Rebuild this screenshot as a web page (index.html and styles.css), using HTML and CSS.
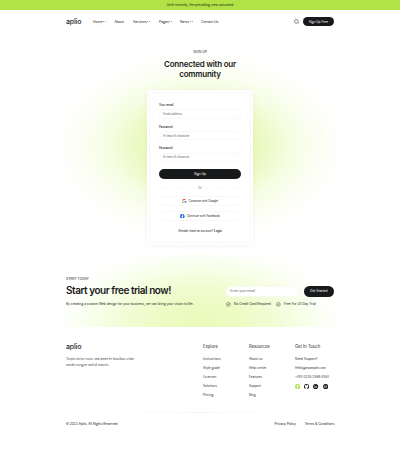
FILE: index.html
```html
<!DOCTYPE html>
<html lang="en">
<head>
<meta charset="utf-8">
<title>Aplio – Sign Up</title>
<link rel="stylesheet" href="styles.css">
</head>
<body>
<div class="banner">Until recently, the prevailing view assumed</div>
<header class="header">
  <div class="logo">aplio</div>
  <nav class="nav">
    <a class="nav-home">Home<svg class="chev" viewBox="0 0 6 4"><path d="M1 1l2 2 2-2"/></svg></a>
    <a class="nav-about">About</a>
    <a class="nav-services">Services<svg class="chev" viewBox="0 0 6 4"><path d="M1 1l2 2 2-2"/></svg></a>
    <a class="nav-pages">Pages<svg class="chev" viewBox="0 0 6 4"><path d="M1 1l2 2 2-2"/></svg></a>
    <a class="nav-news">News<svg class="chev" viewBox="0 0 6 4"><path d="M1 1l2 2 2-2"/></svg></a>
    <a>Contact Us</a>
  </nav>
  <div class="search"><svg viewBox="0 0 20 20"><circle cx="9.5" cy="9.5" r="7.500"/><path d="M15 15l3 3"/></svg></div>
  <a class="btn btn-nav">Sign Up Free</a>
</header>
<main>
  <section class="signup">
    <p class="eyebrow">SIGN UP</p>
    <h1>Connected with our<br>community</h1>
    <div class="card">
      <form class="form">
        <label>Your email</label>
        <div class="field"><span>Email address</span></div>
        <label>Password</label>
        <div class="field"><span>At least 8 character</span></div>
        <label>Password</label>
        <div class="field"><span>At least 8 character</span></div>
        <a class="btn btn-submit">Sign Up</a>
        <div class="or"><span>Or</span></div>
        <div class="social google"><svg viewBox="0 0 48 48"><path fill="#ea4335" d="M24 9.500c3.500 0 6.700 1.200 9.200 3.600l6.900-6.900C35.900 2.400 30.500 0 24 0 14.600 0 6.500 5.400 2.600 13.200l8 6.200C12.400 13.700 17.700 9.500 24 9.500z"/><path fill="#4285f4" d="M47 24.500c0-1.600-.2-3.100-.4-4.500H24v9h12.900c-.6 3-2.200 5.500-4.700 7.200l7.700 6C44.400 38 47 31.800 47 24.500z"/><path fill="#fbbc05" d="M10.500 28.600a14 14 0 0 1 0-9.200l-8-6.200a24 24 0 0 0 0 21.600z"/><path fill="#34a853" d="M24 48c6.500 0 11.900-2.100 15.900-5.800l-7.700-6c-2.200 1.500-4.900 2.300-8.200 2.300-6.300 0-11.600-4.200-13.500-9.900l-8 6.200C6.500 42.600 14.600 48 24 48z"/></svg><span>Continue with Google</span></div>
        <div class="social facebook"><svg viewBox="0 0 24 24"><circle cx="12" cy="12" r="12" fill="#1769e0"/><path fill="#fff" d="M10 24v-9H7v-4h3V8.500C10 5.500 12 4 14.500 4H17v3.500h-1.500C14 7.500 13.600 8.200 13.600 9v2H17l-.6 4h-2.800v9z"/></svg><span>Continue with Facebook</span></div>
        <p class="already">Already have an account? <b>Login</b></p>
      </form>
    </div>
  </section>
  <section class="cta">
    <div class="cta-copy">
      <p class="eyebrow">START TODAY</p>
      <h2>Start your free trial now!</h2>
      <p class="lead">By creating a custom Web design for your business, we can bring your vision to life.</p>
    </div>
    <div class="cta-action">
      <div class="cta-row"><div class="cta-field">Enter your email</div><a class="btn btn-start">Get Started</a></div>
      <div class="checks">
        <svg viewBox="0 0 20 20"><circle cx="10" cy="10" r="8"/><path d="M6 9.500l3.500 3.500L15 7"/></svg><span class="check-first">No Credit Card Required</span>
        <svg viewBox="0 0 20 20"><circle cx="10" cy="10" r="8"/><path d="M6 9.500l3.500 3.500L15 7"/></svg><span class="check-second">Free For 30 Day Trial</span>
      </div>
    </div>
  </section>
</main>
<footer class="footer">
  <div class="footer-top">
    <div class="about">
      <div class="logo">aplio</div>
      <p>Turpis tortor nunc sed amet et faucibus vitae<br>morbi congue sed id mauris.</p>
    </div>
    <div class="col"><h3>Explore</h3><a>Instructions</a><a>Style guide</a><a>Licenses</a><a>Solutions</a><a>Pricing</a></div>
    <div class="col"><h3>Resources</h3><a>About us</a><a>Help center</a><a>Features</a><a>Support</a><a>Blog</a></div>
    <div class="col"><h3>Get In Touch</h3><a>Need Support?</a><a>Hello@example.com</a><a>+(91) 0235 2569 4550</a>
      <div class="icons">
        <svg viewBox="0 0 24 24"><circle cx="12" cy="12" r="12" fill="#b1e346"/><path fill="#fff" d="M10 22v-8H7v-3.500h3V8c0-2.600 1.500-4 4-4h2.500v3H15c-1 0-1.400.5-1.400 1.400v2.100h2.900L16 14h-2.400v8z"/></svg>
        <svg viewBox="0 0 24 24"><path fill="#18191b" d="M12 0a12 12 0 0 0-4 23.400c.6.1.8-.3.8-.6v-2.200c-3.300.7-4-1.500-4-1.500-.6-1.400-1.400-1.800-1.400-1.800-1-.7.1-.7.1-.7 1.200.1 1.900 1.200 1.900 1.200 1 1.800 2.800 1.300 3.500 1 .1-.8.4-1.300.7-1.600-2.600-.3-5.400-1.300-5.400-6 0-1.300.4-2.400 1.200-3.200-.1-.3-.5-1.500.1-3.200 0 0 1-.3 3.300 1.200a11 11 0 0 1 6 0C17.300 4.500 18.300 4.800 18.300 4.800c.6 1.700.2 2.900.1 3.200.8.800 1.200 1.900 1.200 3.200 0 4.700-2.800 5.700-5.500 6 .5.4.9 1.100.9 2.200v3.400c0 .3.200.7.800.6A12 12 0 0 0 12 0z"/></svg>
        <svg viewBox="0 0 24 24"><circle cx="12" cy="12" r="12" fill="#18191b"/><path fill="#fff" d="M6 10h2.500v7H6zM6 6.500h2.500V9H6zM10 10h2.400v1c1.400-2 5.600-1.800 5.600 2v4h-2.500v-3.500c0-2-3-2-3 0V17H10z"/></svg>
        <svg viewBox="0 0 24 24"><circle cx="12" cy="12" r="12" fill="#18191b"/><path fill="none" stroke="#fff" stroke-width="1.500" d="M5.500 8H9c2.500 0 2.500 4 0 4H5.500zM5.500 12h4c2.800 0 2.800 4.500 0 4.500h-4zM13 13h6c0-4.500-6-4.500-6 0s5 4 5.500 2M14 7.500h4"/></svg>
      </div>
    </div>
  </div>
  <div class="divider"></div>
  <div class="footer-bottom"><span class="copy">© 2023 Aplio. All Rights Reserved</span><span class="privacy">Privacy Policy</span><span>Terms &amp; Conditions</span></div>
</footer>
</body>
</html>
```
FILE: styles.css
```css
* { box-sizing: border-box; }
body { margin: 0; width: 400px; height: 450px; overflow: hidden; background: #fff; color: #18191b; font-family: Inter, sans-serif; font-size: 3px; line-height: 4px; }
p, h1, h2, h3 { margin: 0; }
svg { display: block; flex: none; }
a, span, label { white-space: nowrap; }
.banner { height: 10px; line-height: 11.500px; text-align: center; background: #b1e346; font-size: 3.250px; letter-spacing: .02px; }
.header { height: 23px; padding: 0 66px; display: flex; align-items: center; }
.logo { width: 23px; font-size: 7px; line-height: 8px; font-weight: 500; letter-spacing: -.17px; color: #2a2b2d; }
.nav { display: flex; align-items: center; flex: 1; font-size: 3.350px; }
.nav a { display: flex; align-items: center; height: 9px; }
.nav .nav-home { width: 21px; padding-left: 3px; border: 1px solid #fafafa; border-radius: 5px; }
.chev { width: 2.900px; height: 1.930px; margin-left: .7px; fill: none; stroke: #222; stroke-width: 1.700; }
.nav-home { margin-right: 4.500px; }
.nav-about { width: 18.500px; }
.nav-services { width: 26px; }
.nav-pages { width: 21px; }
.nav-news { width: 21px; }
.search { width: 10px; height: 10px; margin-right: 1.500px; border-radius: 50%; display: grid; place-items: center; background: #fdfdfd; }
.search svg { width: 5px; height: 5px; fill: none; stroke: #222; stroke-width: 2; }
.btn { display: flex; align-items: center; justify-content: center; border-radius: 6px; background: #18191b; color: #fff; }
.btn-nav { width: 31.300px; height: 8.500px; font-size: 3.200px; }
.signup { height: 221px; padding-top: 17px; display: flex; flex-direction: column; align-items: center;
  background: radial-gradient(ellipse 152px 98px at 200px 113px, #e3f8ad 0%, #e6f9b6 30%, #edfac9 45%, #f6fde2 60%, #fbfef2 76%, #fefffc 90%, #fff 100%); }
.eyebrow { font-size: 3.350px; line-height: 4px; }
h1 { margin-top: 4.700px; font-size: 8px; line-height: 10.200px; font-weight: 600; text-align: center; letter-spacing: -.22px; }
.card { margin-top: 11px; width: 106px; height: 155px; padding: 2px; border-radius: 4px; background: #fff; box-shadow: 0 1px 5px rgba(80, 100, 40, .07); flex: none; }
.form { height: 151px; padding: 10px 9px 0; border: 1px dashed #f3f3f3; border-radius: 2px; display: flex; flex-direction: column; }
label { font-size: 2.900px; line-height: 4px; font-weight: 500; }
.field { height: 9.500px; margin: 2.200px 0 6px; border: 1px solid #f8f8f8; border-radius: 5px; padding-left: 3px; display: flex; align-items: center; color: #666; font-size: 2.900px; flex: none; }
.btn-submit { height: 10.400px; flex: none; margin-top: .4px; font-size: 3.200px; }
.or { height: 4px; margin: 7.300px 0 5.700px; display: flex; align-items: center; gap: 4px; color: #555; }
.or::before, .or::after { content: ""; flex: 1; border-top: 1px dashed #f7f7f7; }
.social { height: 10px; border: 1px solid #f8f8f8; border-radius: 5px; display: flex; align-items: center; justify-content: center; gap: 2px; font-size: 2.900px; flex: none; }
.social svg { width: 4.600px; height: 4.600px; }
.facebook { margin-top: 5px; }
.already { margin-top: 8px; text-align: center; font-size: 2.950px; white-space: nowrap; letter-spacing: -.04px; }
.already b { font-weight: 600; }
.cta { height: 73px; padding: 23px 66px 0; display: flex; justify-content: space-between;
  background: radial-gradient(ellipse 148px 84px at 200px 73px, #eafabb 0%, #ecfbc1 25%, #f1fcd2 48%, #f8fee8 70%, #fdfffa 90%, #fff 100%); }
h2 { margin-top: 2.500px; font-size: 10px; line-height: 12px; font-weight: 600; white-space: nowrap; letter-spacing: -.47px; }
.lead { margin-top: 6px; font-size: 3.220px; white-space: nowrap; }
.cta-action { width: 107.700px; padding-top: 9px; }
.cta-row { display: flex; justify-content: space-between; }
.cta-field { width: 72.500px; height: 10.500px; padding-left: 3px; border: 1px solid #f8faf2; border-radius: 6px; background: #fff; color: #666; line-height: 9.500px; font-size: 3.250px; }
.btn-start { width: 30.500px; height: 10.500px; font-size: 3.250px; }
.checks { display: flex; align-items: center; margin-top: 5.500px; font-size: 3.200px; }
.checks svg { width: 4.700px; height: 4.700px; margin-right: 3px; fill: none; stroke: #222; stroke-width: 1.800; }
.check-first { width: 42.300px; }
.check-second { letter-spacing: .02px; }
.footer { padding: 15.500px 66px 0; }
.footer-top { display: flex; height: 70px; }
.about { width: 137px; flex: none; }
.about p { margin-top: 5px; line-height: 6px; font-size: 3.200px; letter-spacing: .01px; color: #444; white-space: nowrap; }
.col { width: 46px; flex: none; display: flex; flex-direction: column; color: #333; }
.col h3 { margin: 1.500px 0 4.700px; font-size: 4.200px; line-height: 6px; font-weight: 400; white-space: nowrap; color: #18191b; }
.col a { height: 9.150px; line-height: 9.150px; font-size: 3.200px; flex: none; }
.col h3 + a { margin-top: -.2px; }
.icons { display: flex; gap: 4px; margin-top: 2px; }
.icons svg { width: 5.200px; height: 5.200px; }
.divider { height: 1px; margin-top: -1px; background: linear-gradient(90deg, transparent 10%, #f6f6f6 50%, transparent 90%); }
.footer-bottom { display: flex; margin-top: 9.500px; font-size: 3.220px; }
.copy { width: 208.500px; flex: none; }
.privacy { width: 30.300px; flex: none; }
```
